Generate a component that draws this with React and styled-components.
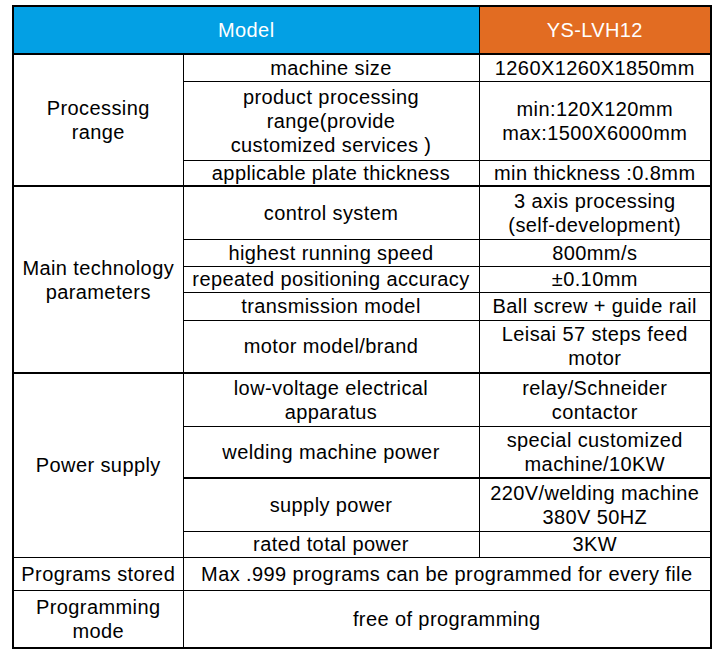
import React from "react";
import styled, { createGlobalStyle } from "styled-components";

const Global = createGlobalStyle`
  html, body { margin: 0; padding: 0; background: #fff; }
  body { font-family: "Liberation Sans", Arial, sans-serif; }
`;

const Page = styled.div`
  padding: 5px 0 0 12px;
`;

const Table = styled.table`
  border-collapse: collapse;
  table-layout: fixed;
  width: 698px;
  border: 2px solid #000;
  font-family: "Liberation Sans", Arial, sans-serif;
  font-size: 20px;
  line-height: 24px;
  letter-spacing: 0.4px;
  color: #000;
`;

const Row = styled.tr`
  height: ${(p) => p.$h}px;
`;

const HeadCell = styled.th`
  background: ${(p) => p.$bg};
  color: #fff;
  font-weight: normal;
  text-align: center;
  vertical-align: middle;
  padding: 0;
  border: 1px solid #000;
  border-bottom: 2px solid #000;
`;

const Cell = styled.td`
  text-align: center;
  vertical-align: middle;
  padding: 0;
  border: 1px solid #000;
  ${(p) => (p.$thickTop ? "border-top: 2px solid #000;" : "")}
  white-space: nowrap;
`;

const rows = [
  { h: 27, group: { label: ["Processing", "range"], span: 3 }, a: ["machine size"], b: ["1260X1260X1850mm"] },
  { h: 79, a: ["product processing", "range(provide", "customized services )"], b: ["min:120X120mm", "max:1500X6000mm"] },
  { h: 26, a: ["applicable plate thickness"], b: ["min thickness :0.8mm"] },
  { h: 53, thick: true, group: { label: ["Main technology", "parameters"], span: 5 }, a: ["control system"], b: ["3 axis processing", "(self-development)"] },
  { h: 27, a: ["highest running speed"], b: ["800mm/s"] },
  { h: 26, a: ["repeated positioning accuracy"], b: ["±0.10mm"] },
  { h: 28, a: ["transmission model"], b: ["Ball screw + guide rail"] },
  { h: 53, a: ["motor model/brand"], b: ["Leisai 57 steps feed", "motor"] },
  { h: 53, thick: true, group: { label: ["Power supply"], span: 4 }, a: ["low-voltage electrical", "apparatus"], b: ["relay/Schneider", "contactor"] },
  { h: 52, a: ["welding machine power"], b: ["special customized", "machine/10KW"] },
  { h: 53, thickA: true, a: ["supply power"], b: ["220V/welding machine", "380V 50HZ"] },
  { h: 26, a: ["rated total power"], b: ["3KW"] },
];

const Lines = ({ items }) =>
  items.map((t, i) => (
    <React.Fragment key={i}>
      {i > 0 && <br />}
      {t}
    </React.Fragment>
  ));

export default function App() {
  return (
    <Page>
      <Global />
      <Table>
        <colgroup>
          <col style={{ width: 170 }} />
          <col style={{ width: 296 }} />
          <col style={{ width: 232 }} />
        </colgroup>
        <tbody>
          <Row $h={48}>
            <HeadCell colSpan={2} $bg="#03a0e4">Model</HeadCell>
            <HeadCell $bg="#e26c22">YS-LVH12</HeadCell>
          </Row>
          {rows.map((r, i) => (
            <Row key={i} $h={r.h}>
              {r.group && (
                <Cell rowSpan={r.group.span} $thickTop={r.thick}>
                  <Lines items={r.group.label} />
                </Cell>
              )}
              <Cell $thickTop={r.thick || r.thickA}>
                <Lines items={r.a} />
              </Cell>
              <Cell $thickTop={r.thick || r.thickA}>
                <Lines items={r.b} />
              </Cell>
            </Row>
          ))}
          <Row $h={33}>
            <Cell>Programs stored</Cell>
            <Cell colSpan={2}>Max .999 programs can be programmed for every file</Cell>
          </Row>
          <Row $h={58}>
            <Cell>
              Programming
              <br />
              mode
            </Cell>
            <Cell colSpan={2}>free of programming</Cell>
          </Row>
        </tbody>
      </Table>
    </Page>
  );
}
